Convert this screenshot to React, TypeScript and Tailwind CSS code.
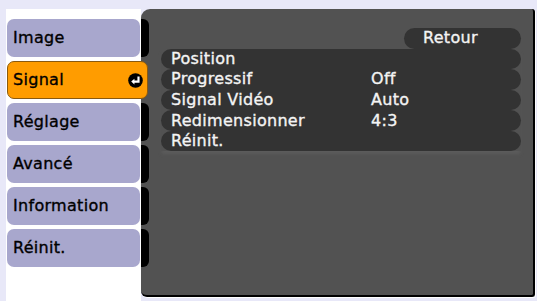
const tabs = ["Image", "Signal", "Réglage", "Avancé", "Information", "Réinit."];
const selected = 1;

const rows = [
  { label: "Position", value: "" },
  { label: "Progressif", value: "Off" },
  { label: "Signal Vidéo", value: "Auto" },
  { label: "Redimensionner", value: "4:3" },
  { label: "Réinit.", value: "" },
];

function EnterIcon() {
  return (
    <svg width="15" height="15" viewBox="0 0 14 14" className="shrink-0">
      <circle cx="7" cy="7" r="6.8" fill="#000" />
      <path d="M9.8 3.2 V8 H4.6" stroke="#fff" strokeWidth="2" fill="none" />
      <path d="M6 5.3 L3 8 L6 10.7 Z" fill="#fff" />
    </svg>
  );
}

export default function App() {
  return (
    <div
      className="flex h-[301px] w-[537px] overflow-hidden bg-[#e8e8f8] pl-[6px] pt-[9px] tracking-[0.3px] [-webkit-text-stroke:0.35px]"
      style={{ fontFamily: '"DejaVu Sans", Verdana, sans-serif' }}
    >
      {/* tabs */}
      <div className="relative z-10 flex h-[292px] w-[135px] shrink-0 flex-col gap-[4px] bg-white pl-[1px] pt-[10px]">
        {tabs.map((t, i) =>
          i === selected ? (
            <div
              key={t}
              className="flex h-[38px] w-[141px] items-center justify-between rounded-[7px] border border-[#8a5a10] bg-[#ff9c00] pl-[5px] pr-[4px] text-[16px] text-black"
            >
              <span>{t}</span>
              <EnterIcon />
            </div>
          ) : (
            <div
              key={t}
              className="flex h-[38px] w-[133px] items-center rounded-[7px] bg-[#a8a7cd] pl-[6px] text-[16px] text-black"
            >
              {t}
            </div>
          )
        )}
      </div>

      {/* panel */}
      <div className="flex h-[288px] w-[394px] shrink-0 rounded-tl-[9px] rounded-tr-[3px] rounded-bl-[6px] rounded-br-[3px] border-b-2 border-r-2 border-black bg-[#525252] shadow-[1px_1px_0_#fff]">
        <div className="flex w-[8px] shrink-0 flex-col gap-[4px] pt-[10px]">
          {tabs.map((t, i) => (
            <div
              key={t}
              className={
                i === selected
                  ? "h-[38px] w-[8px]"
                  : "h-[38px] w-[8px] rounded-r-[6px] bg-black"
              }
            />
          ))}
        </div>

        <div className="flex flex-1 flex-col pl-[12px] pr-[12px] pt-[19px] text-[16px] leading-none text-[#f4f4f4]">
          <div className="flex h-[20.5px] w-[117px] items-center self-end rounded-full bg-[#333] pl-[19px]">
            Retour
          </div>
          <div className="flex flex-col shadow-[0_4px_3px_-1px_#5c5c5c]">
            {rows.map((r) => (
              <div
                key={r.label}
                className="flex h-[20.6px] items-center rounded-full bg-[#333] pl-[10px]"
              >
                <span className="w-[200px]">{r.label}</span>
                <span>{r.value}</span>
              </div>
            ))}
          </div>
        </div>
      </div>
    </div>
  );
}
